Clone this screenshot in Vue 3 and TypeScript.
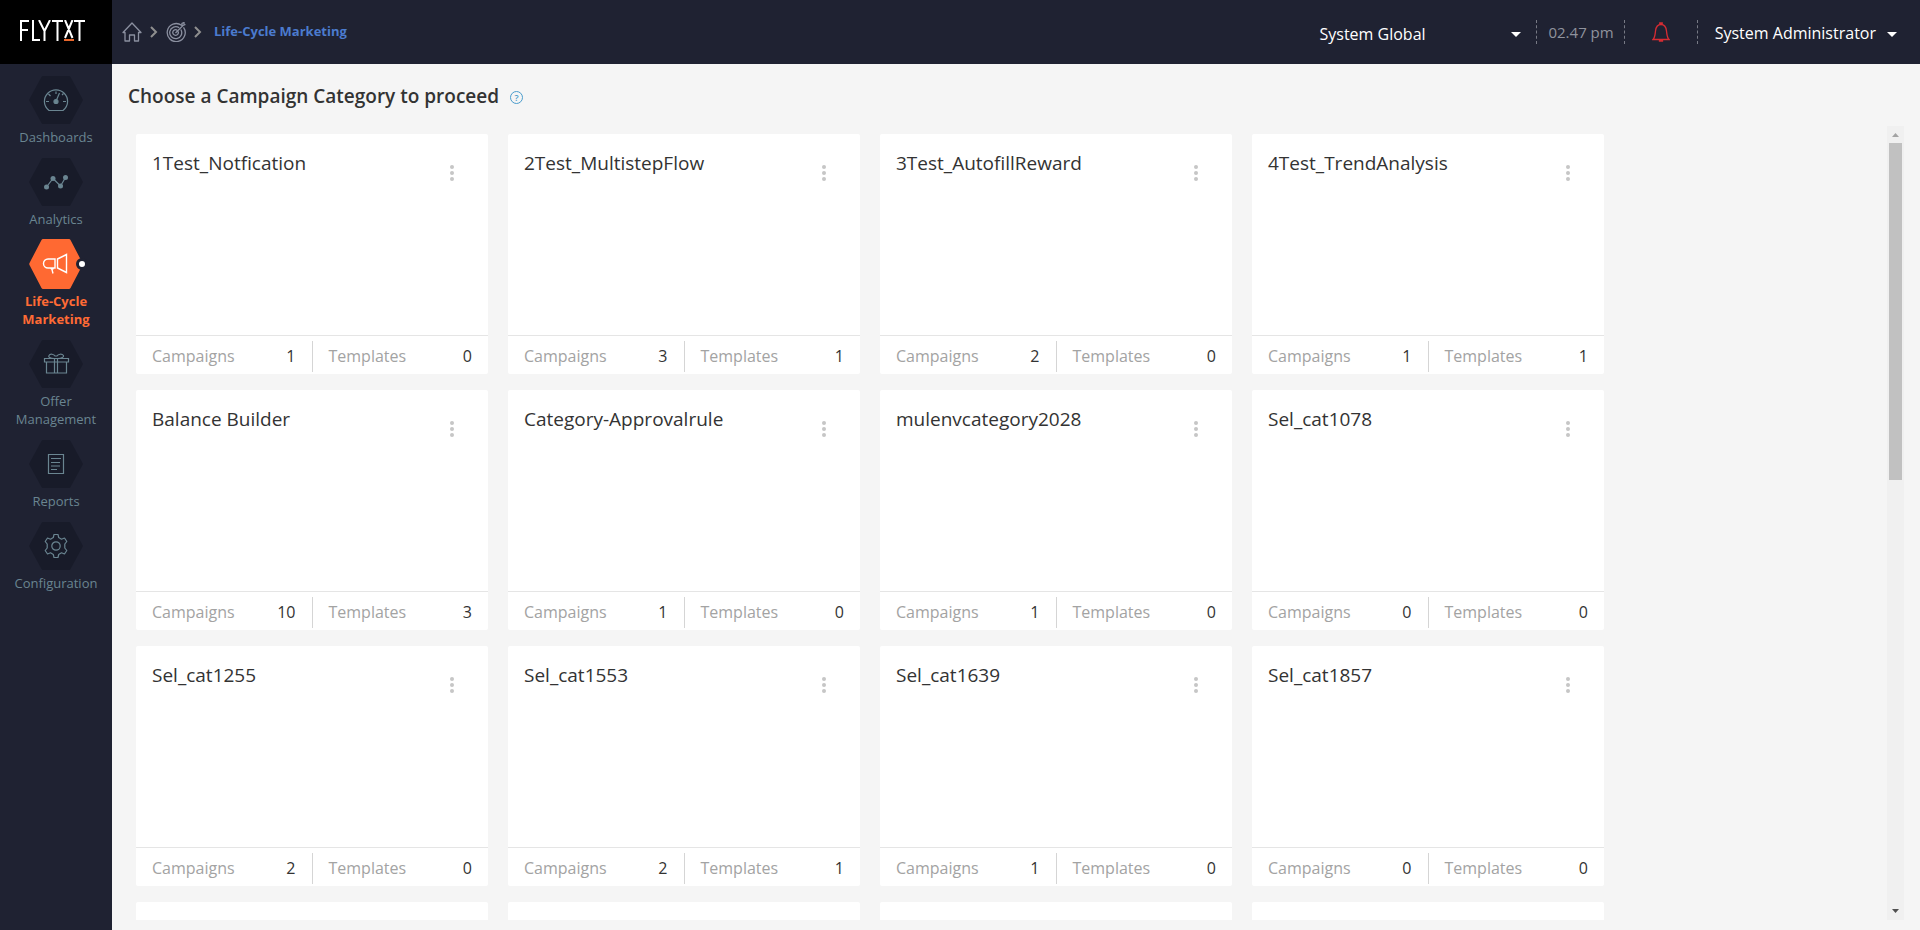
<script setup lang="ts">
interface Category {
  name: string
  campaigns: number
  templates: number
}

interface NavItem {
  label: string
  icon: string
  active?: boolean
}

const nav: NavItem[] = [
  { label: 'Dashboards', icon: 'gauge' },
  { label: 'Analytics', icon: 'chart' },
  { label: 'Life-Cycle Marketing', icon: 'megaphone', active: true },
  { label: 'Offer Management', icon: 'gift' },
  { label: 'Reports', icon: 'report' },
  { label: 'Configuration', icon: 'gear' },
]

const categories: Category[] = [
  { name: '1Test_Notfication', campaigns: 1, templates: 0 },
  { name: '2Test_MultistepFlow', campaigns: 3, templates: 1 },
  { name: '3Test_AutofillReward', campaigns: 2, templates: 0 },
  { name: '4Test_TrendAnalysis', campaigns: 1, templates: 1 },
  { name: 'Balance Builder', campaigns: 10, templates: 3 },
  { name: 'Category-Approvalrule', campaigns: 1, templates: 0 },
  { name: 'mulenvcategory2028', campaigns: 1, templates: 0 },
  { name: 'Sel_cat1078', campaigns: 0, templates: 0 },
  { name: 'Sel_cat1255', campaigns: 2, templates: 0 },
  { name: 'Sel_cat1553', campaigns: 2, templates: 1 },
  { name: 'Sel_cat1639', campaigns: 1, templates: 0 },
  { name: 'Sel_cat1857', campaigns: 0, templates: 0 },
]
const pending = 4
</script>

<template>
  <div class="app">
    <aside class="sidebar">
      <a class="logo" href="#" aria-label="Flytxt">
        <svg width="66" height="22" viewBox="0 0 66 22" fill="none" stroke="#fff" stroke-width="2">
          <path d="M9 1H1V21M1 10H8M13 0V20H20M19 0L24.500 11V21M30 0L24.500 11M32 1H43M37.500 1V21M45 0L52.500 18M52.500 0L45 18M54 1H65M59.500 1V21" />
          <path d="M44 20H54" stroke="#e8672c" />
        </svg>
      </a>
      <nav class="nav">
        <a v-for="item in nav" :key="item.label" href="#" class="nav-item" :class="{ active: item.active }">
          <span class="hex">
            <svg class="hex-shape" viewBox="0 0 54 48" preserveAspectRatio="none"><path d="M14 0H40Q41 0 41.500 1L53.500 23Q54 24 53.500 25L41.500 47Q41 48 40 48H14Q13 48 12.500 47L.5 25Q0 24 .5 23L12.500 1Q13 0 14 0Z" /></svg>
            <svg class="glyph" width="28" height="28" viewBox="0 0 28 28" fill="none" stroke="currentColor" stroke-width="1.200">
              <template v-if="item.icon === 'gauge'">
                <path d="M7 24.500H21C24 22 25.600 19 25.600 15.500A11.600 11.600 0 0 0 2.400 15.500C2.400 19 4 22 7 24.500Z" />
                <path d="M4 15.500H7M21 15.500H24M6.500 8L8.500 10M14 5.500V8M20 9L21.500 7.500M14.500 14L17.500 7" />
                <circle cx="14" cy="15.500" r="2" fill="currentColor" />
              </template>
              <template v-else-if="item.icon === 'chart'">
                <path d="M4.500 19L11 10.500L18.500 18L23.500 9.500" />
                <g fill="currentColor" stroke="none"><circle cx="4.500" cy="19" r="2.500" /><circle cx="11" cy="10.500" r="2.500" /><circle cx="18.500" cy="18" r="2.500" /><circle cx="23.500" cy="9.500" r="2.500" /></g>
              </template>
              <template v-else-if="item.icon === 'megaphone'">
                <path d="M13 9H6A4.500 4.500 0 0 0 1.500 13.500A4.500 4.500 0 0 0 6 18H13ZM15.500 9L24.500 4.500V22.500L15.500 18ZM8.500 18L10 19.500L11 23.500M11 19.500V18" stroke-width="1.400" />
              </template>
              <template v-else-if="item.icon === 'gift'">
                <path d="M2.500 8.500H26.500V12H2.500ZM4.500 12V23H24.500V12M12.500 8.500V23M15.500 8.500V23M12.500 8.500C8 8.500 6 7 7 5.500C8 3.500 12 4 13 6H15C16 4 20 3.500 21.500 5.500C22 7 20 8.500 15.500 8.500" />
              </template>
              <template v-else-if="item.icon === 'report'">
                <path d="M6.500 4.500H21.500V23.500H6.500ZM9 8.500H19M9 12.500H18M9 16H18M9 19.500H15" />
              </template>
              <template v-else>
                <circle cx="14" cy="14" r="4.200" />
                <path d="M12 2.500H16L16.700 5.500L19.500 7.200L22.500 6L24.800 9.500L22.800 12V16L24.800 18.500L22.500 22L19.500 20.800L16.700 22.500L16 25.500H12L11.300 22.500L8.500 20.800L5.500 22L3.200 18.500L5.200 16V12L3.200 9.500L5.500 6L8.500 7.200L11.300 5.500Z" stroke-linejoin="round" />
              </template>
            </svg>
            <span v-if="item.active" class="marker"></span>
          </span>
          <span class="nav-label">{{ item.label }}</span>
        </a>
      </nav>
    </aside>

    <div class="page">
      <header class="topbar">
        <nav class="crumbs" aria-label="Breadcrumb">
          <a href="#" class="crumb" aria-label="Home">
            <svg width="20" height="20" viewBox="0 0 20 20" fill="none" stroke="currentColor" stroke-width="1.300"><path d="M1 10.500L10 1L19 10.500H16.500V19H12.500V13H7.500V19H3V10.500Z" stroke-linejoin="round" /></svg>
          </a>
          <svg class="chev" width="8" height="12" viewBox="0 0 8 12" fill="none" stroke="currentColor" stroke-width="2"><path d="M1 1L6 6L1 11" /></svg>
          <a href="#" class="crumb" aria-label="Campaigns">
            <svg width="20" height="20" viewBox="0 0 20 20" fill="none" stroke="currentColor" stroke-width="1.300"><path d="M15.500 3.300A9 9 0 1 0 17.500 5.300M13.200 5.800A6 6 0 1 0 14.800 7.500M11.200 8.200A2.800 2.800 0 1 0 12.200 9.500M9.500 11L17 3.500L19.500 2.500M16 4V1.500L18 .5V2.500" /></svg>
          </a>
          <svg class="chev" width="8" height="12" viewBox="0 0 8 12" fill="none" stroke="currentColor" stroke-width="2"><path d="M1 1L6 6L1 11" /></svg>
          <a href="#" class="crumb-current">Life-Cycle Marketing</a>
        </nav>
        <button type="button" class="picker"><span>System Global</span><i class="caret"></i></button>
        <span class="clock">02.47 pm</span>
        <button type="button" class="bell" aria-label="Notifications">
          <svg width="18" height="20" viewBox="0 0 18 20" fill="none" stroke="currentColor" stroke-width="1.300"><path d="M1 17.500H17C15 15.500 15 13 14.500 9C14 4.500 12 2.500 9 2.500S4 4.500 3.500 9C3 13 3 15.500 1 17.500ZM7.800 2.500V1H10.200V2.500M7.500 18V19H10.500V18" /></svg>
        </button>
        <button type="button" class="user"><span>System Administrator</span><i class="caret"></i></button>
      </header>

      <main class="content">
        <h1 class="title">
          Choose a Campaign Category to proceed
          <button type="button" class="help" aria-label="Help">?</button>
        </h1>
        <div class="scroll-row">
          <section class="viewport">
            <div class="grid">
              <article v-for="c in categories" :key="c.name" class="card">
                <div class="card-head">
                  <h2 class="card-name">{{ c.name }}</h2>
                  <button type="button" class="more" :aria-label="'Options for ' + c.name"><i></i><i></i><i></i></button>
                </div>
                <div class="card-foot">
                  <div class="stat"><span>Campaigns</span><b>{{ c.campaigns }}</b></div>
                  <div class="stat"><span>Templates</span><b>{{ c.templates }}</b></div>
                </div>
              </article>
              <article v-for="n in pending" :key="n" class="card"></article>
            </div>
          </section>
          <div class="scrollbar" aria-hidden="true">
            <svg width="17" height="17" viewBox="0 0 17 17"><path d="M5 11L8.500 7L12 11Z" fill="#a3a3a3" /></svg>
            <div class="track"><div class="thumb"></div></div>
            <svg width="17" height="17" viewBox="0 0 17 17"><path d="M5 6L8.500 10L12 6Z" fill="#505050" /></svg>
          </div>
        </div>
      </main>
    </div>
  </div>
</template>

<style>
body {
  margin: 0;
}
</style>

<style scoped>
.app {
  display: flex;
  height: 100vh;
  background: #f5f5f5;
  color: #333;
  font-family: "Open Sans", "Noto Sans", sans-serif;
}
a {
  color: inherit;
  text-decoration: none;
}
button {
  padding: 0;
  border: 0;
  background: none;
  color: inherit;
  font: inherit;
  cursor: pointer;
}
svg {
  display: block;
}
.sidebar {
  flex: 0 0 112px;
  background: #1f2232;
}
.logo {
  display: flex;
  align-items: center;
  height: 64px;
  padding: 0 0 2px 20px;
  box-sizing: border-box;
  background: #000;
}
.nav {
  display: flex;
  flex-direction: column;
  gap: 12px;
  padding-top: 12px;
}
.nav-item {
  display: flex;
  flex-direction: column;
  align-items: center;
  gap: 4px;
  padding: 0 12px;
  color: #6a8591;
  font-size: 13px;
  line-height: 18px;
  text-align: center;
}
.hex {
  position: relative;
  display: grid;
  place-items: center;
  width: 54px;
  height: 48px;
}
.hex-shape {
  position: absolute;
  inset: 0;
  width: 100%;
  height: 100%;
  fill: #181b29;
}
.glyph {
  position: relative;
}
.active {
  color: #ff6b35;
  font-weight: 700;
}
.active .hex {
  height: 50px;
  margin: -1px 0;
}
.active .hex-shape {
  fill: #ff6932;
}
.active .glyph {
  color: #fff;
}
.marker {
  position: absolute;
  top: 19px;
  right: -5px;
  width: 6px;
  height: 6px;
  border: 3px solid #1f2232;
  border-radius: 50%;
  background: #fff;
}
.page {
  display: flex;
  flex: 1;
  flex-direction: column;
  min-width: 0;
}
.topbar {
  display: flex;
  align-items: center;
  flex: 0 0 64px;
  background: #1f2232;
  color: #fff;
  font-size: 16px;
  line-height: 24px;
}
.crumbs {
  display: flex;
  align-items: center;
  gap: 8px;
  flex: 1;
  padding-left: 10px;
}
.crumb {
  color: #8b90a0;
}
.chev {
  color: #8f8f8f;
}
.crumb-current {
  padding: 0 0 2px 4px;
  color: #4b7bce;
  font-size: 13px;
  font-weight: 700;
}
.picker {
  display: flex;
  align-items: center;
  justify-content: space-between;
  width: 202px;
  margin-right: 15px;
  padding-top: 4px;
}
.caret {
  width: 0;
  border: 5px solid transparent;
  border-top-color: #fff;
  border-bottom-width: 0;
}
.clock {
  padding: 0 10px 0 11px;
  border: dashed #777a85;
  border-width: 0 1px;
  color: #8f929d;
  font-size: 15px;
}
.bell {
  display: grid;
  place-items: center;
  width: 73px;
  height: 24px;
  border-right: 1px dashed #777a85;
  color: #d62c33;
}
.user {
  display: flex;
  align-items: center;
  gap: 11px;
  padding: 2px 23px 0 17px;
}
.user .caret {
  margin-top: 3px;
}
.content {
  display: flex;
  flex: 1;
  flex-direction: column;
  min-height: 0;
  padding: 20px 16px 10px;
}
.title {
  display: flex;
  align-items: center;
  gap: 11px;
  margin: 0 0 18px;
  font-size: 19px;
  font-weight: 600;
  line-height: 24px;
}
.help {
  width: 13px;
  height: 13px;
  margin-top: 2px;
  border: 1px solid #4a9ccc;
  border-radius: 50%;
  color: #4a9ccc;
  font-size: 9px;
  line-height: 11px;
}
.scroll-row {
  display: flex;
  flex: 1;
  min-height: 0;
}
.viewport {
  flex: 1;
  overflow: auto;
  padding: 8px 8px 0;
  scrollbar-width: none;
}
.grid {
  display: grid;
  grid-template-columns: repeat(auto-fill, 352px);
  gap: 16px 20px;
  max-width: 1480px;
}
.card {
  display: flex;
  flex-direction: column;
  height: 240px;
  border-radius: 2px;
  background: #fff;
}
.card-head {
  display: flex;
  justify-content: space-between;
  align-items: flex-start;
  flex: 1;
  padding: 16px 34px 0 16px;
}
.card-name {
  margin: 0;
  font-size: 19px;
  font-weight: 400;
  line-height: 26px;
}
.more {
  display: grid;
  gap: 2px;
  padding-top: 15px;
}
.more i {
  width: 4px;
  height: 4px;
  border-radius: 50%;
  background: #c6c6c6;
}
.card-foot {
  display: flex;
  border-top: 1px solid #e5e5e5;
  padding: 5px 0 2px;
}
.stat {
  display: flex;
  flex: 1;
  justify-content: space-between;
  padding: 0 16px;
  color: #a3a3a3;
  font-size: 16px;
  line-height: 31px;
}
.stat + .stat {
  border-left: 1px solid #d5d5d5;
}
.stat b {
  color: #333;
  font-weight: 400;
}
.scrollbar {
  display: flex;
  flex: 0 0 17px;
  flex-direction: column;
  background: #f0f0f0;
}
.track {
  flex: 1;
  padding: 0 2px;
}
.thumb {
  height: 44.400%;
  background: #c1c1c1;
}
</style>
